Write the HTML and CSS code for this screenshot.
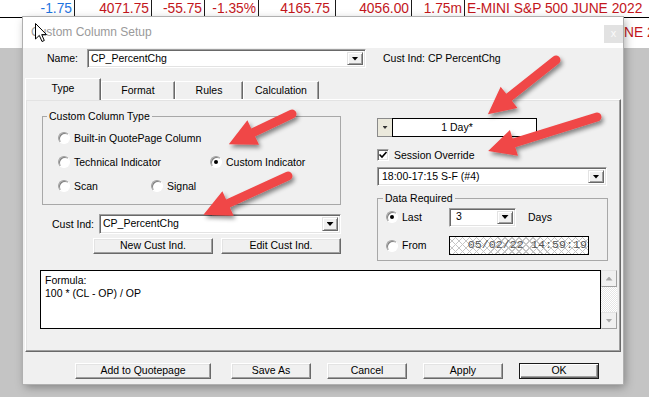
FILE: index.html
```html
<!DOCTYPE html>
<html lang="en">
<head>
    <meta charset="UTF-8">
    <title>Custom Column Setup</title>
    <link rel="stylesheet" href="styles.css">
</head>
<body>
<div class="desk">

    <!-- quote page behind the dialog -->
    <div class="quote-row">
        <div class="cell cell-1 blue">-1.75</div>
        <div class="cell cell-2">4071.75</div>
        <div class="cell cell-3">-55.75</div>
        <div class="cell cell-4">-1.35%</div>
        <div class="cell cell-5">4165.75</div>
        <div class="cell cell-6">4056.00</div>
        <div class="cell cell-7">1.75m</div>
        <div class="cell-sym">E-MINI S&amp;P 500 JUNE 2022</div>
    </div>
    <div class="quote-row-2"><span class="sym-tail">NE 2022</span></div>

    <div class="dialog">
        <div class="titlebar">
            <span class="title">Custom Column Setup</span>
            <span class="close">x</span>
        </div>

        <div class="client">
            <div class="name-row">
                <span class="name-label">Name:</span>
                <div class="combo combo-name">
                    <span class="combo-text">CP_PercentChg</span>
                    <span class="drop"><i class="tri"></i></span>
                </div>
                <span class="cust-caption">Cust Ind: CP PercentChg</span>
            </div>

            <div class="tabs">
                <div class="tab tab-type tab-active">Type</div>
                <div class="tab tab-format">Format</div>
                <div class="tab tab-rules">Rules</div>
                <div class="tab tab-calc">Calculation</div>
            </div>

            <div class="pane">
                <div class="pane-top">
                    <div class="col-left">
                        <fieldset class="group group-type">
                            <legend>Custom Column Type</legend>
                            <div class="opts">
                                <div class="opt-row">
                                    <span class="opt"><i class="radio"></i>Built-in QuotePage Column</span>
                                </div>
                                <div class="opt-row">
                                    <span class="opt opt-tech"><i class="radio"></i>Technical Indicator</span>
                                    <span class="opt"><i class="radio on"></i>Custom Indicator</span>
                                </div>
                                <div class="opt-row">
                                    <span class="opt opt-scan"><i class="radio"></i>Scan</span>
                                    <span class="opt"><i class="radio"></i>Signal</span>
                                </div>
                            </div>
                        </fieldset>

                        <div class="cust-row">
                            <span class="cust-label">Cust Ind:</span>
                            <div class="combo combo-cust">
                                <span class="combo-text">CP_PercentChg</span>
                                <span class="drop"><i class="tri"></i></span>
                            </div>
                        </div>
                        <div class="cust-btns">
                            <div class="btn btn-cust">New Cust Ind.</div>
                            <div class="btn btn-cust">Edit Cust Ind.</div>
                        </div>
                    </div>

                    <div class="col-right">
                        <div class="day-ctl">
                            <span class="day-btn"><i class="tri tri-small"></i></span>
                            <span class="day-field">1 Day*</span>
                        </div>
                        <div class="check-row">
                            <span class="check">
                                <svg width="10" height="10" viewBox="0 0 10 10"><path d="M1.5 4.5 L4 7 L8.5 2" fill="none" stroke="#000" stroke-width="1.6"/></svg>
                            </span>
                            Session Override
                        </div>
                        <div class="combo combo-session">
                            <span class="combo-text">18:00-17:15 S-F (#4)</span>
                            <span class="drop"><i class="tri"></i></span>
                        </div>

                        <fieldset class="group group-data">
                            <legend>Data Required</legend>
                            <div class="data-row data-row-1">
                                <span class="data-opt"><i class="radio on"></i>Last</span>
                                <div class="combo combo-days">
                                    <span class="combo-text">3</span>
                                    <span class="drop"><i class="tri"></i></span>
                                </div>
                                <span class="days-label">Days</span>
                            </div>
                            <div class="data-row data-row-2">
                                <span class="data-opt"><i class="radio"></i>From</span>
                                <span class="date-field">05/02/22 14:59:19</span>
                            </div>
                        </fieldset>
                    </div>
                </div>

                <div class="formula">
                    <div class="formula-text">
                        <div>Formula:</div>
                        <div>100 * (CL - OP) / OP</div>
                    </div>
                    <div class="sb">
                        <span class="sb-btn"><i class="sb-up"></i></span>
                        <span class="sb-track"></span>
                        <span class="sb-btn"><i class="sb-down"></i></span>
                    </div>
                </div>
            </div>

            <div class="btn-row">
                <div class="btn btn-add">Add to Quotepage</div>
                <div class="btn">Save As</div>
                <div class="btn">Cancel</div>
                <div class="btn">Apply</div>
                <div class="btn btn-ok">OK</div>
            </div>
        </div>
    </div>

    <!-- annotation arrows drawn over the screenshot -->
    <svg class="arrows" width="649" height="397" viewBox="0 0 649 397">
        <defs>
            <filter id="arrow-shadow" filterUnits="userSpaceOnUse" x="0" y="0" width="649" height="397">
                <feDropShadow dx="2" dy="3" stdDeviation="2.2" flood-color="#000" flood-opacity="0.45"/>
            </filter>
        </defs>
        <g fill="#f04646" filter="url(#arrow-shadow)">
            <path transform="translate(292 114) rotate(154.5)" d="M0 -4.5 H43 V-13.5 L70 0 L43 13.5 V4.5 H0 A4.5 4.5 0 0 1 0 -4.5 Z"/>
            <path transform="translate(288 176) rotate(155.4)" d="M0 -4.5 H66 V-13.5 L93 0 L66 13.5 V4.5 H0 A4.5 4.5 0 0 1 0 -4.5 Z"/>
            <path transform="translate(556 60) rotate(141.5)" d="M0 -4.5 H60 V-13.5 L87 0 L60 13.5 V4.5 H0 A4.5 4.5 0 0 1 0 -4.5 Z"/>
            <path transform="translate(597 117) rotate(162.7)" d="M0 -4.5 H87 V-13.5 L114 0 L87 13.5 V4.5 H0 A4.5 4.5 0 0 1 0 -4.5 Z"/>
        </g>
    </svg>

    <svg class="cursor" width="13" height="20" viewBox="0 0 13 20">
        <path d="M0.5 0.5 V16 L4.3 12.4 L7 18.5 L9.3 17.5 L6.7 11.6 H11.5 Z" fill="#fff" stroke="#000" stroke-linejoin="round"/>
    </svg>
</div>
</body>
</html>
```

FILE: styles.css
```css
* {
    margin: 0;
    padding: 0;
    box-sizing: border-box;
}
body {
    font-family: "Liberation Sans", Arial, sans-serif;
    background: #c4c4c4;
}
.desk {
    position: relative;
    width: 649px;
    height: 397px;
    overflow: hidden;
}

/***************************************************/
/* quote rows behind */

.quote-row {
    display: flex;
    height: 18px;
    background: #fff;
    border-bottom: 1px solid #000;
    font-size: 13.8px;
    line-height: 17px;
    color: #c3161c;
    white-space: nowrap;
}
.cell {
    text-align: right;
    padding-right: 2px;
    border-right: 1px solid #1a1a1a;
}
.blue { color: #1f74df; }
.cell-1 { width: 75px; }
.cell-2 { width: 77px; }
.cell-3 { width: 53px; }
.cell-4 { width: 54px; }
.cell-5 { width: 77px; padding-right: 5px; }
.cell-6 { width: 76px; }
.cell-7 { width: 53px; }
.cell-sym { padding-left: 2px; }

.quote-row-2 {
    height: 30px;
    background: #fff;
    color: #c3161c;
    font-size: 13.8px;
    line-height: 30px;
    padding-left: 624px;
    white-space: nowrap;
    overflow: hidden;
}

/***************************************************/
/* dialog */

.dialog {
    position: absolute;
    left: 23px;
    top: 17px;
    width: 600px;
    height: 367px;
    background: #f0f0f0;
    box-shadow: 0 0 0 1px #b0b0b0, 2px 3px 9px rgba(0, 0, 0, 0.35);
    display: flex;
    flex-direction: column;
}
.titlebar {
    height: 31px;
    background: #fff;
    display: flex;
    justify-content: space-between;
    padding-left: 8px;
}
.title {
    font-size: 12px;
    line-height: 31px;
    color: #9a9a9a;
}
.close {
    width: 19px;
    height: 18px;
    margin-top: 8px;
    background: #e2e2e2;
    color: #fafafa;
    font-size: 11px;
    line-height: 17px;
    text-align: center;
}

.client {
    flex: 1;
    display: flex;
    flex-direction: column;
    font-size: 10.5px;
    line-height: 13px;
    color: #000;
    white-space: nowrap;
}

/*********************/
/* combo boxes */

.combo {
    display: flex;
    align-items: stretch;
    background: #fff;
    border: 1px solid;
    border-color: #a0a0a0 #fff #fff #a0a0a0;
    box-shadow: inset 1px 1px 0 #696969, inset -1px -1px 0 #e3e3e3;
    padding: 2px 2px 2px 2px;
}
.combo-text {
    flex: 1;
    padding-left: 1px;
    line-height: 13px;
}
.drop {
    width: 16px;
    background: #f0f0f0;
    border: 1px solid;
    border-color: #e3e3e3 #696969 #696969 #e3e3e3;
    box-shadow: inset 1px 1px 0 #fff, inset -1px -1px 0 #a0a0a0;
    display: flex;
    align-items: center;
    justify-content: center;
}
.tri {
    display: block;
    width: 7px;
    height: 4px;
    background: #000;
    clip-path: polygon(0 0, 100% 0, 50% 100%);
}
.tri-small {
    width: 5px;
    height: 3px;
    background: #333;
}

/*********************/
/* name row */

.name-row {
    display: flex;
    align-items: center;
    height: 19px;
    margin-top: 1px;
    padding-left: 24px;
}
.name-label { width: 40px; }
.combo-name {
    width: 279px;
    height: 19px;
}
.cust-caption { margin-left: 17px; }

/*********************/
/* tabs */

.tabs {
    display: flex;
    align-items: flex-end;
    height: 21px;
    margin-top: 10px;
    padding-left: 2px;
    position: relative;
    z-index: 1;
}
.tab {
    height: 18px;
    background: #f0f0f0;
    border-top: 1px solid #fff;
    border-left: 1px solid #fff;
    border-right: 1px solid #696969;
    box-shadow: inset -1px 0 0 #a0a0a0;
    text-align: center;
    line-height: 16px;
}
.tab-active {
    height: 22px;
    margin-bottom: -1px;
    line-height: 19px;
}
.tab-type { width: 76px; }
.tab-format { width: 74px; }
.tab-rules { width: 68px; }
.tab-calc { width: 76px; }

.pane {
    margin-left: 2px;
    width: 596px;
    height: 253px;
    border: 1px solid;
    border-color: #fff #696969 #696969 #fff;
    box-shadow: inset -1px -1px 0 #a0a0a0, inset 1px 1px 0 #e3e3e3;
    padding: 10px 0 0 16px;
}
.pane-top {
    display: flex;
}

/*********************/
/* group boxes and radios */

.group {
    border: 1px solid #a8a8a8;
    padding: 4px 0 6px 4px;
}
.group legend {
    padding: 0 2px;
    line-height: 12px;
}
.opts { padding-left: 11px; }
.opt-row {
    display: flex;
    align-items: center;
    height: 24px;
}
.opt {
    display: flex;
    align-items: center;
}
.opt-tech { width: 152px; }
.opt-scan { width: 93px; }

.radio {
    width: 12px;
    height: 12px;
    margin-right: 4px;
    border-radius: 50%;
    background: #fff;
    border: 1px solid;
    border-color: #a0a0a0 #fff #fff #a0a0a0;
    box-shadow: inset 1px 1px 0 #808080;
    display: flex;
    align-items: center;
    justify-content: center;
}
.radio.on::after {
    content: "";
    width: 4px;
    height: 4px;
    border-radius: 50%;
    background: #000;
}

.col-left { width: 299px; }
.group-type { width: 299px; }

.cust-row {
    display: flex;
    align-items: center;
    height: 20px;
    margin-top: 9px;
    padding-left: 10px;
}
.cust-label { width: 49px; }
.combo-cust {
    width: 252px;
    height: 20px;
}
.cust-btns {
    display: flex;
    gap: 8px;
    margin-top: 4px;
    padding-left: 51px;
}

/*********************/
/* buttons */

.btn {
    width: 80px;
    height: 16px;
    background: #f0f0f0;
    border: 1px solid;
    border-color: #fff #696969 #696969 #fff;
    box-shadow: inset -1px -1px 0 #a0a0a0, inset 1px 1px 0 #e3e3e3;
    text-align: center;
    line-height: 13px;
}
.btn-cust { width: 128px; }
.btn-add {
    width: 136px;
    margin-right: 4px;
}
.btn-ok {
    border-color: #1a1a1a;
    box-shadow: inset 1px 1px 0 #fff, inset -1px -1px 0 #696969, inset -2px -2px 0 #a0a0a0;
}
.btn-row {
    display: flex;
    gap: 16px;
    margin-top: 11px;
    padding-left: 52px;
}

/*********************/
/* right column */

.col-right {
    width: 231px;
    margin-left: 36px;
}
.day-ctl {
    display: flex;
    width: 160px;
    height: 19px;
    margin-top: 8px;
}
.day-btn {
    width: 15px;
    background: #ebe9dc;
    border: 1px solid #8a8a8a;
    border-right: none;
    display: flex;
    align-items: center;
    justify-content: center;
}
.day-field {
    flex: 1;
    background: #fff;
    border: 1px solid #000;
    text-align: center;
    padding-right: 15px;
    line-height: 17px;
}
.check-row {
    display: flex;
    align-items: center;
    height: 12px;
    margin-top: 12px;
}
.check {
    width: 12px;
    height: 12px;
    margin-right: 5px;
    background: #fff;
    border: 1px solid;
    border-color: #a0a0a0 #fff #fff #a0a0a0;
    box-shadow: inset 1px 1px 0 #696969, inset -1px -1px 0 #e3e3e3;
    display: flex;
}
.combo-session {
    width: 230px;
    height: 19px;
    margin-top: 6px;
}
.combo-session .combo-text { padding-left: 2px; }

.group-data {
    width: 231px;
    margin-top: 6px;
    padding: 3px 0 5px 5px;
}
.data-row {
    display: flex;
    align-items: center;
    padding-left: 3px;
}
.data-row-1 { height: 20px; }
.data-row-2 {
    height: 19px;
    margin-top: 9px;
}
.data-opt {
    display: flex;
    align-items: center;
    width: 63px;
}
.combo-days {
    width: 67px;
    height: 19px;
}
.combo-days .combo-text {
    padding-left: 4px;
    line-height: 11px;
}
.days-label { margin-left: 12px; }
.date-field {
    width: 140px;
    height: 19px;
    border: 1px solid #000;
    background:
        repeating-linear-gradient(45deg, #c6c6c6 0 1px, transparent 1px 5px),
        repeating-linear-gradient(-45deg, #c6c6c6 0 1px, transparent 1px 5px),
        #fff;
    font-family: "Liberation Mono", "Courier New", monospace;
    font-size: 11.7px;
    line-height: 17px;
    color: #555;
    text-align: right;
    padding-right: 1px;
}

/*********************/
/* formula */

.formula {
    display: flex;
    width: 577px;
    height: 59px;
    margin: 9px 0 0 -2px;
}
.formula-text {
    flex: 1;
    background: #fff;
    border: 1px solid #000;
    padding: 3px 4px;
    line-height: 13px;
}
.sb {
    width: 16px;
    display: flex;
    flex-direction: column;
}
.sb-btn {
    height: 17px;
    background: #f0f0f0;
    border: 1px solid;
    border-color: #e3e3e3 #a0a0a0 #a0a0a0 #e3e3e3;
    display: flex;
    align-items: center;
    justify-content: center;
}
.sb-track {
    flex: 1;
    background: repeating-conic-gradient(#e6e6e6 0 25%, #fff 0 50%) 0 0 / 2px 2px;
}
.sb-up,
.sb-down {
    display: block;
    width: 7px;
    height: 4px;
    background: #a8a8a8;
}
.sb-up { clip-path: polygon(50% 0, 100% 100%, 0 100%); }
.sb-down { clip-path: polygon(0 0, 100% 0, 50% 100%); }

/***************************************************/
/* overlays */

.arrows {
    position: absolute;
    left: 0;
    top: 0;
    pointer-events: none;
}
.cursor {
    position: absolute;
    left: 35px;
    top: 23px;
}
```
